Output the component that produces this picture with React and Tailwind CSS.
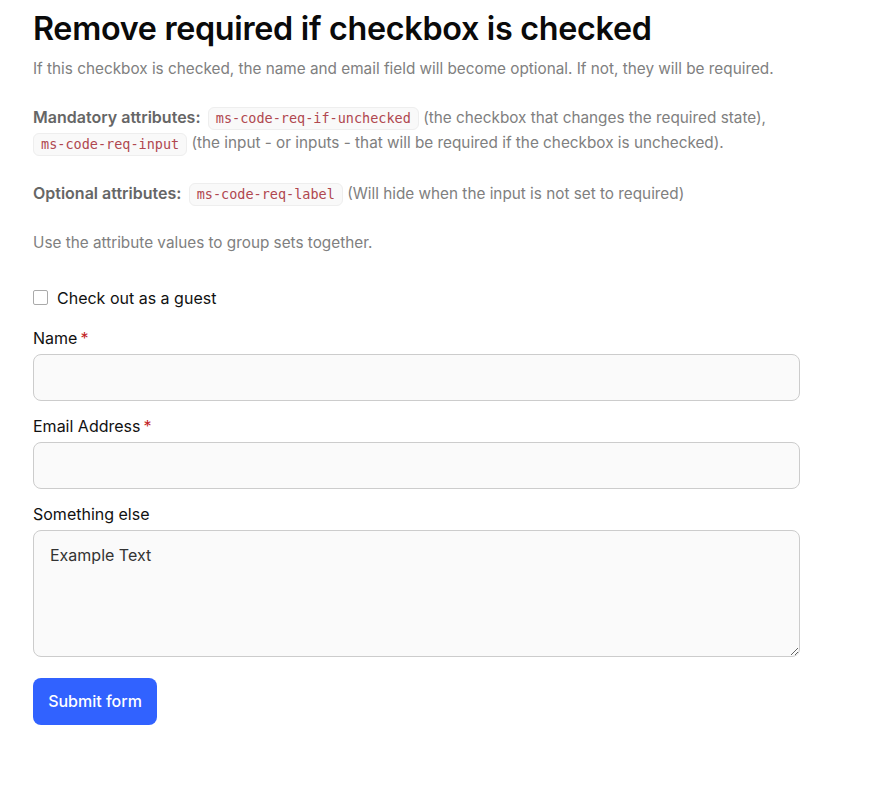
import React from 'react';

const Code = ({ children }) => (
    <code className="inline-block rounded-md border border-[#eeeeee] bg-[#f9f9f9] px-[7px] font-['DejaVu_Sans_Mono',monospace] text-[13.5px] leading-[21px] text-[#b0474f] align-middle">
        {children}
    </code>
);

const Label = ({ children, required }) => (
    <label className="block text-[16px] leading-[24px] text-[#111111] mb-[4px]">
        {children}
        {required && <span className="ml-[3px] text-[#c21f1f]">*</span>}
    </label>
);

export default function App() {
    return (
        <div className="min-h-screen bg-white font-['Inter',sans-serif]">
            <div className="w-[767px] pl-[33px] pt-[9px] box-content">
                <h1 className="text-[32.3px] leading-[40px] font-semibold tracking-[-0.3px] text-[#0a0a0a]">
                    Remove required if checkbox is checked
                </h1>
                <p className="mt-[8px] text-[15.3px] leading-[24px] text-[#808080]">
                    If this checkbox is checked, the name and email field will become optional. If not, they will be required.
                </p>

                <p className="mt-[24px] text-[15.3px] leading-[25px] text-[#808080]">
                    <span className="mr-[3px] text-[16px] font-semibold text-[#666666]">Mandatory attributes:</span>{' '}
                    <Code>ms-code-req-if-unchecked</Code> (the checkbox that changes the required state),{' '}
                    <Code>ms-code-req-input</Code> (the input - or inputs - that will be required if the checkbox is unchecked).
                </p>

                <p className="mt-[25px] text-[15.3px] leading-[25px] text-[#808080]">
                    <span className="mr-[3px] text-[16px] font-semibold text-[#666666]">Optional attributes:</span>{' '}
                    <Code>ms-code-req-label</Code> (Will hide when the input is not set to required)
                </p>

                <p className="mt-[24px] text-[15.3px] leading-[25px] text-[#808080]">
                    Use the attribute values to group sets together.
                </p>

                <form className="mt-[31px]" onSubmit={(e) => e.preventDefault()}>
                    <label className="flex items-center gap-[9px] text-[16px] leading-[24px] text-[#111111]">
                        <input
                            type="checkbox"
                            className="appearance-none w-[15px] h-[15px] rounded-[2px] border border-[#aaaaaa] bg-white"
                        />
                        Check out as a guest
                    </label>

                    <div className="mt-[16px]">
                        <Label required>Name</Label>
                        <input className="block w-full h-[47px] rounded-[8px] border border-[#cccccc] bg-[#fafafa] px-[16px] outline-none" />
                    </div>

                    <div className="mt-[13px]">
                        <Label required>Email Address</Label>
                        <input className="block w-full h-[47px] rounded-[8px] border border-[#cccccc] bg-[#fafafa] px-[16px] outline-none" />
                    </div>

                    <div className="mt-[13px]">
                        <Label>Something else</Label>
                        <textarea
                            defaultValue="Example Text"
                            className="block w-full h-[127px] rounded-[8px] border border-[#cccccc] bg-[#fafafa] px-[16px] py-[12px] text-[16px] leading-[24px] text-[#333333] outline-none"
                        />
                    </div>

                    <button
                        type="submit"
                        className="mt-[21px] h-[47px] w-[124px] rounded-[8px] bg-[#3162ff] text-[16px] font-medium text-white"
                    >
                        Submit form
                    </button>
                </form>
            </div>
        </div>
    );
}
